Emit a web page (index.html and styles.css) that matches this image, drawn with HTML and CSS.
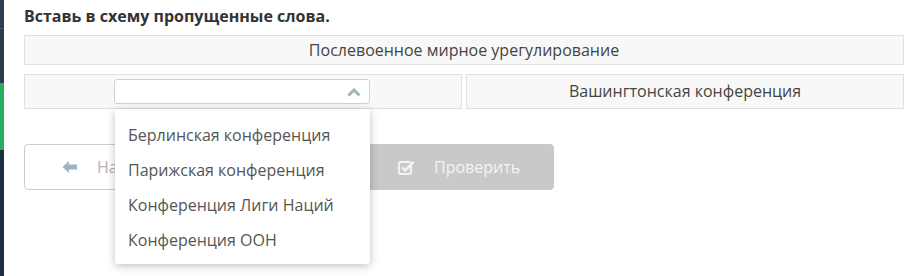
FILE: index.html
```html
<!DOCTYPE html>
<html lang="ru">
<head>
<meta charset="utf-8">
<link rel="stylesheet" href="styles.css">
</head>
<body>
<div class="page">
  <aside class="rail">
    <div class="rail-top"></div>
    <div class="rail-mid"></div>
    <div class="rail-active"></div>
    <div class="rail-bottom"></div>
  </aside>
  <main class="content">
    <h1 class="task">Вставь в схему пропущенные слова.</h1>
    <div class="scheme">
      <div class="row">
        <div class="cell">Послевоенное мирное урегулирование</div>
      </div>
      <div class="row two">
        <div class="cell cell-select">
          <div class="select-wrap">
            <div class="select">
              <svg class="chev" width="14" height="9" viewBox="0 0 14 9"><path d="M1.5 7.5 L7 2 L12.5 7.5" fill="none" stroke="#a4b4bb" stroke-width="3"/></svg>
            </div>
            <ul class="menu">
              <li>Берлинская конференция</li>
              <li>Парижская конференция</li>
              <li>Конференция Лиги Наций</li>
              <li>Конференция ООН</li>
            </ul>
          </div>
        </div>
        <div class="cell">Вашингтонская конференция</div>
      </div>
    </div>
    <div class="actions">
      <button class="btn btn-back">
        <svg width="16" height="14" viewBox="0 0 16 14"><path d="M0.5 7 L7 1 L7 4.5 L15 4.5 L15 9.5 L7 9.5 L7 13 Z" fill="#9fb3c2"/></svg>
        <span>Назад</span>
      </button>
      <button class="btn btn-check">
        <svg width="17" height="15" viewBox="0 0 17 15"><rect x="1" y="2" width="12" height="12" rx="2" fill="none" stroke="#f2f2f2" stroke-width="2"/><path d="M4 7.5 L7 10.5 L15.5 2" fill="none" stroke="#f2f2f2" stroke-width="2.6"/></svg>
        <span>Проверить</span>
      </button>
    </div>
  </main>
</div>
</body>
</html>
```
FILE: styles.css
```css
* { box-sizing: border-box; }
html, body { margin: 0; padding: 0; background: #fff; }
body { font-family: "Open Sans", "Noto Sans", sans-serif; color: #444; }
.page { display: flex; min-height: 276px; }
.rail { width: 4px; display: flex; flex-direction: column; flex: none; }
.rail-top { height: 29px; background: #2c3e50; border-bottom: 1px solid #4a5a6a; }
.rail-mid { height: 54px; background: #2b3b4c; }
.rail-active { height: 67px; background: #27ae60; }
.rail-bottom { flex: 1; background: #1b2d42; }
.content { flex: 1; padding: 6px 17px 0 20px; }
.task { margin: 0 0 9px; font-size: 16px; line-height: 20px; font-weight: 700; color: #333; }
.scheme { display: flex; flex-direction: column; gap: 9px; }
.row { display: grid; grid-template-columns: 1fr; }
.row.two { grid-template-columns: 1fr 1fr; gap: 4px; }
.cell { background: #f8f8f8; border: 1px solid #e0e0e0; text-align: center; font-size: 16px; line-height: 28px; color: #444; }
.row.two .cell { height: 35px; line-height: 33px; }
.cell-select { display: flex; align-items: center; padding-left: 89px; }
.select-wrap { position: relative; width: 256px; height: 25px; }
.select { height: 25px; border: 1px solid #ccd3d6; border-radius: 3px; background: #fff; position: relative; }
.chev { position: absolute; right: 8px; top: 8px; }
.menu { position: absolute; left: 1px; top: 30px; width: 255px; margin: 0; padding: 9px 0 0; list-style: none; background: #fff; border-radius: 3px; box-shadow: 0 2px 8px rgba(0,0,0,0.25); height: 155px; z-index: 5; text-align: left; }
.menu li { padding: 0 0 0 13px; font-size: 16px; line-height: 35px; color: #555; }
.actions { display: flex; margin-top: 35px; gap: 150px; }
.btn { width: 190px; height: 46px; display: flex; align-items: center; font-family: inherit; font-size: 16px; border-radius: 4px; padding: 0; }
.btn-back { background: #fff; border: 1px solid #ccc; color: #b3b3b3; padding-left: 37px; gap: 19px; }
.btn-check { background: #c9c9c9; border: 1px solid #c9c9c9; color: #f4f4f4; padding-left: 33px; gap: 19px; }
```
